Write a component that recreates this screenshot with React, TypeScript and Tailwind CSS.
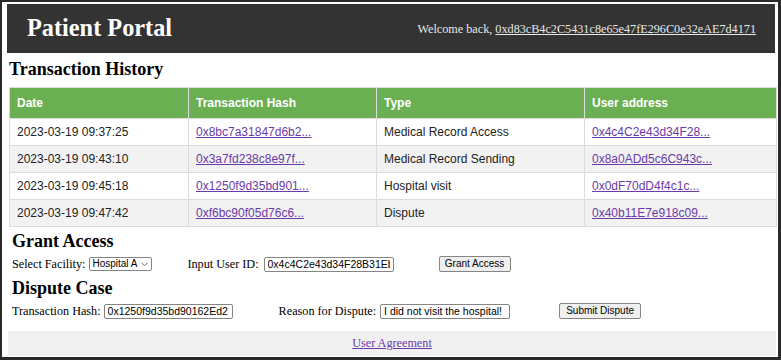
import { useState } from 'react';

interface Tx {
  date: string;
  hash: string;
  type: string;
  user: string;
}

const txs: Tx[] = [
  { date: '2023-03-19 09:37:25', hash: '0x8bc7a31847d6b2...', type: 'Medical Record Access', user: '0x4c4C2e43d34F28...' },
  { date: '2023-03-19 09:43:10', hash: '0x3a7fd238c8e97f...', type: 'Medical Record Sending', user: '0x8a0ADd5c6C943c...' },
  { date: '2023-03-19 09:45:18', hash: '0x1250f9d35bd901...', type: 'Hospital visit', user: '0x0dF70dD4f4c1c...' },
  { date: '2023-03-19 09:47:42', hash: '0xf6bc90f05d76c6...', type: 'Dispute', user: '0x40b11E7e918c09...' },
];

const serif = "font-['Liberation_Serif',serif]";
const sans = "font-['Liberation_Sans',Arial,sans-serif]";

const fieldCls = `h-[15px] border border-[#858585] rounded-[2px] bg-white px-[3px] text-[10.5px] leading-none text-black ${sans}`;
const btnCls = `h-[16px] bg-[#efefef] border border-[#858585] rounded-[2px] text-[10px] leading-none whitespace-nowrap text-black ${sans}`;

export default function App() {
  const [facility, setFacility] = useState('Hospital A');
  const [userId, setUserId] = useState('0x4c4C2e43d34F28B31EbB');
  const [txHash, setTxHash] = useState('0x1250f9d35bd90162Ed21a');
  const [reason, setReason] = useState('I did not visit the hospital!');

  return (
    <div className={`w-[781px] h-[360px] overflow-hidden bg-white border-l-2 border-t-2 border-r-[3px] border-b-[3px] border-[#2a2a2a] pl-[5px] pt-[2px] ${serif} text-black`}>
      {/* Header */}
      <div className="w-[768px] h-[49px] bg-[#333333] flex items-center justify-between pl-[20px] pr-[19px]">
        <h1 className="text-[24.3px] font-bold text-white leading-none">Patient Portal</h1>
        <p className="text-[12.2px] text-[#e8e8e8] mt-[1px]">
          Welcome back, <a href="#" className="underline text-[#e8e8e8]">0xd83cB4c2C5431c8e65e47fE296C0e32eAE7d4171</a>
        </p>
      </div>

      {/* Transaction history */}
      <h2 className="text-[18px] font-bold leading-none mt-[7px] ml-[2px]">Transaction History</h2>
      <table className={`mt-[9px] ml-[2px] w-[768px] border-collapse text-[12px] ${sans}`}>
        <thead>
          <tr className="bg-[#6aaf52] text-white h-[31px]">
            <th className="w-[179px] text-left font-bold px-[7px] border border-[#dcdcdc]">Date</th>
            <th className="w-[188px] text-left font-bold px-[7px] border border-[#dcdcdc]">Transaction Hash</th>
            <th className="w-[208px] text-left font-bold px-[7px] border border-[#dcdcdc]">Type</th>
            <th className="text-left font-bold px-[7px] border border-[#dcdcdc]">User address</th>
          </tr>
        </thead>
        <tbody>
          {txs.map((t, i) => (
            <tr key={t.hash} className={`h-[27px] ${i % 2 === 1 ? 'bg-[#f2f2f2]' : 'bg-white'}`}>
              <td className="px-[7px] border border-[#dcdcdc] text-[#222]">{t.date}</td>
              <td className="px-[7px] border border-[#dcdcdc]">
                <a href="#" className="underline text-[#6b3aa8]">{t.hash}</a>
              </td>
              <td className="px-[7px] border border-[#dcdcdc] text-[#222]">{t.type}</td>
              <td className="px-[7px] border border-[#dcdcdc]">
                <a href="#" className="underline text-[#6b3aa8]">{t.user}</a>
              </td>
            </tr>
          ))}
        </tbody>
      </table>

      {/* Grant access */}
      <h2 className="text-[18px] font-bold leading-none mt-[5px] ml-[5px]">Grant Access</h2>
      <div className="flex items-center h-[16px] mt-[6px] ml-[5px] text-[12.2px]">
        <span>Select Facility:</span>
        <div className="relative ml-[4px]">
          <select
            value={facility}
            onChange={(e) => setFacility(e.target.value)}
            className={`appearance-none block w-[63px] h-[14px] border border-[#858585] rounded-[2px] bg-white pl-[2px] pr-[10px] text-[10px] leading-none ${sans}`}
          >
            <option>Hospital A</option>
            <option>Hospital B</option>
            <option>Hospital C</option>
          </select>
          <svg className="absolute right-[4px] top-[5px] pointer-events-none" width="7" height="5" viewBox="0 0 7 5" fill="none">
            <path d="M0.5 0.8l3 3 3-3" stroke="#666" strokeWidth="1" />
          </svg>
        </div>
        <span className="ml-[35px]">Input User ID:</span>
        <input
          value={userId}
          onChange={(e) => setUserId(e.target.value)}
          className={`ml-[5px] w-[130px] ${fieldCls}`}
        />
        <button className={`ml-[45px] w-[72px] ${btnCls}`}>Grant Access</button>
      </div>

      {/* Dispute */}
      <h2 className="text-[18px] font-bold leading-none mt-[7px] ml-[5px]">Dispute Case</h2>
      <div className="flex items-center h-[16px] mt-[6px] ml-[5px] text-[12.2px]">
        <span>Transaction Hash:</span>
        <input
          value={txHash}
          onChange={(e) => setTxHash(e.target.value)}
          className={`ml-[3px] w-[129px] ${fieldCls}`}
        />
        <span className="ml-[46px]">Reason for Dispute:</span>
        <input
          value={reason}
          onChange={(e) => setReason(e.target.value)}
          className={`ml-[4px] w-[130px] ${fieldCls}`}
        />
        <button className={`ml-[49px] w-[82px] ${btnCls}`}>Submit Dispute</button>
      </div>

      {/* Footer */}
      <div className="mt-[12px] ml-[1px] w-[768px] h-[25px] bg-[#f0f0f0] flex items-center justify-center text-[12.2px]">
        <a href="#" className="underline text-[#6b3aa8]">User Agreement</a>
      </div>
    </div>
  );
}
